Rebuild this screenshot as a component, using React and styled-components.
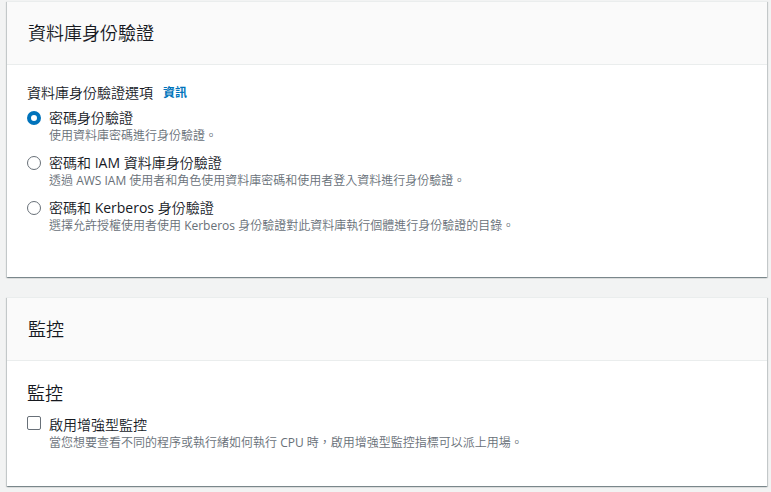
import React, { useState } from 'react';
import styled, { createGlobalStyle } from 'styled-components';

const Global = createGlobalStyle`
  html, body {
    margin: 0;
    background: #f2f3f3;
    font-family: "Open Sans", "Noto Sans CJK TC", sans-serif;
    color: #16191f;
  }
`;

const Page = styled.main`
  display: flex;
  flex-direction: column;
  gap: 20px;
  padding: 1px 4px 6px 7px;
`;

const Card = styled.section`
  background: #fff;
  border-top: 1px solid #eaeded;
  box-shadow: 0 1px 1px 0 rgba(0, 28, 36, 0.3), 1px 1px 1px 0 rgba(0, 28, 36, 0.15),
    -1px 1px 1px 0 rgba(0, 28, 36, 0.15);
`;

const CardHeader = styled.header`
  background: #fafafa;
  border-bottom: 1px solid #eaeded;
  height: 62px;
  display: flex;
  align-items: center;
  padding: 0 20px 0 21px;
`;

const Title = styled.h2`
  margin: 0;
  font-size: 18px;
  font-weight: 350;
  line-height: 24px;
  color: #16191f;
`;

const CardBody = styled.div`
  padding: ${({ $pad }) => $pad};
  min-height: ${({ $min }) => $min}px;
  box-sizing: border-box;
`;

const FieldLabel = styled.div`
  display: flex;
  align-items: center;
  gap: 10px;
  font-size: 14px;
  font-weight: 350;
  line-height: 20px;
  margin-bottom: 5px;
`;

const InfoLink = styled.a`
  color: #0073bb;
  font-size: 12px;
  font-weight: 700;
  text-decoration: none;
`;

const OptionList = styled.div`
  display: flex;
  flex-direction: column;
  gap: 9px;
`;

const Option = styled.label`
  display: grid;
  grid-template-columns: 22px 1fr;
  cursor: pointer;
`;

const RadioDot = styled.span`
  width: 14px;
  height: 14px;
  margin-top: 3px;
  border-radius: 50%;
  box-sizing: border-box;
  border: ${({ $on }) => ($on ? '4px solid #0073bb' : '1.5px solid #687078')};
  background: #fff;
`;

const Box = styled.span`
  width: 14px;
  height: 14px;
  margin-top: 1px;
  border-radius: 2px;
  box-sizing: border-box;
  border: 1.5px solid #687078;
  background: #fff;
`;

const OptionText = styled.div`
  display: flex;
  flex-direction: column;
`;

const OptionTitle = styled.span`
  font-size: 14px;
  font-weight: 350;
  line-height: 20px;
  color: #16191f;
`;

const OptionDesc = styled.span`
  font-size: 12px;
  font-weight: 350;
  line-height: 16px;
  color: #687078;
`;

const Latin = styled.span`
  font-weight: 400;
`;

const SubTitle = styled.h3`
  margin: 0 0 10px;
  font-size: 18px;
  font-weight: 350;
  line-height: 24px;
`;

// Latin words render in Open Sans regular, CJK in the lighter Noto weight
const Mixed = ({ text }) =>
  text.split(/([A-Za-z]+(?: [A-Za-z]+)*)/).map((part, i) =>
    /[A-Za-z]/.test(part) ? <Latin key={i}>{part}</Latin> : part
  );

const authOptions = [
  { id: 'pw', title: '密碼身份驗證', desc: '使用資料庫密碼進行身份驗證。' },
  { id: 'iam', title: '密碼和 IAM 資料庫身份驗證', desc: '透過 AWS IAM 使用者和角色使用資料庫密碼和使用者登入資料進行身份驗證。' },
  { id: 'krb', title: '密碼和 Kerberos 身份驗證', desc: '選擇允許授權使用者使用 Kerberos 身份驗證對此資料庫執行個體進行身份驗證的目錄。' },
];

export default function App() {
  const [auth, setAuth] = useState('pw');
  const [enhanced, setEnhanced] = useState(false);
  return (
    <>
      <Global />
      <Page>
        <Card>
          <CardHeader>
            <Title>資料庫身份驗證</Title>
          </CardHeader>
          <CardBody $pad="18px 20px 20px 20px" $min={212}>
            <FieldLabel>
              資料庫身份驗證選項 <InfoLink href="#">資訊</InfoLink>
            </FieldLabel>
            <OptionList>
              {authOptions.map((o) => (
                <Option key={o.id} onClick={() => setAuth(o.id)}>
                  <RadioDot $on={auth === o.id} />
                  <OptionText>
                    <OptionTitle><Mixed text={o.title} /></OptionTitle>
                    <OptionDesc><Mixed text={o.desc} /></OptionDesc>
                  </OptionText>
                </Option>
              ))}
            </OptionList>
          </CardBody>
        </Card>
        <Card>
          <CardHeader>
            <Title>監控</Title>
          </CardHeader>
          <CardBody $pad="20px 20px 20px 20px" $min={125}>
            <SubTitle>監控</SubTitle>
            <Option onClick={() => setEnhanced(!enhanced)}>
              <Box />
              <OptionText>
                <OptionTitle>啟用增強型監控</OptionTitle>
                <OptionDesc>
                  <Mixed text="當您想要查看不同的程序或執行緒如何執行 CPU 時，啟用增強型監控指標可以派上用場。" />
                </OptionDesc>
              </OptionText>
            </Option>
          </CardBody>
        </Card>
      </Page>
    </>
  );
}
